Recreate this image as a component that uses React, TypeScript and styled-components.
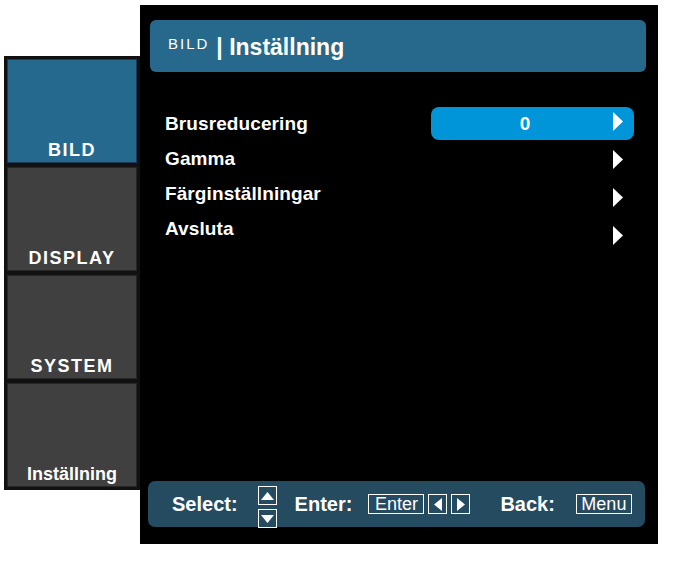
import React from 'react';
import styled, { createGlobalStyle } from 'styled-components';

const GlobalStyle = createGlobalStyle`
  html, body {
    margin: 0;
    background: #ffffff;
  }
  body {
    font-family: "Liberation Sans", Arial, sans-serif;
    color: #ffffff;
  }
`;

const Screen = styled.div`
  display: flex;
  align-items: flex-start;
  padding: 5px 0 0 4px;
`;

const Sidebar = styled.nav`
  margin-top: 51px;
  width: 136px;
  box-sizing: border-box;
  padding: 3px;
  background: #111111;
  display: flex;
  flex-direction: column;
  gap: 4px;
`;

const Tile = styled.div<{ $active?: boolean; $spaced?: boolean }>`
  height: 104px;
  box-sizing: border-box;
  border: 1px solid ${p => (p.$active ? '#1b3a57' : '#262626')};
  background: ${p => (p.$active ? '#26698f' : '#404040')};
  display: flex;
  align-items: flex-end;
  justify-content: center;
  padding-bottom: 1px;
  font-size: 18px;
  font-weight: bold;
  letter-spacing: ${p => (p.$spaced ? '1.5px' : '0')};
`;

const Panel = styled.main`
  width: 518px;
  height: 539px;
  box-sizing: border-box;
  background: #000000;
  padding: 15px 12px 17px 10px;
  display: flex;
  flex-direction: column;
`;

const Header = styled.header`
  height: 52px;
  border-radius: 6px;
  background: #27698c;
  display: flex;
  align-items: baseline;
  padding: 14px 0 0 18px;
  box-sizing: border-box;
`;

const Crumb = styled.span`
  font-size: 15px;
  letter-spacing: 2px;
  position: relative;
  top: -6px;
`;

const Title = styled.span`
  font-size: 23px;
  font-weight: bold;
  margin-left: 7px;
`;

const MenuList = styled.ul`
  list-style: none;
  margin: 35px 0 0 0;
  padding: 0 12px 0 15px;
  display: flex;
  flex-direction: column;
  gap: 2px;
`;

const Row = styled.li`
  height: 33px;
  display: flex;
  align-items: center;
  justify-content: space-between;
`;

const Label = styled.span`
  font-size: 19px;
  font-weight: bold;
  letter-spacing: 0.1px;
`;

const ValueArea = styled.div<{ $selected?: boolean }>`
  width: 203px;
  height: 33px;
  box-sizing: border-box;
  border-radius: 8px;
  background: ${p => (p.$selected ? '#0095d9' : 'transparent')};
  display: flex;
  align-items: center;
  padding-right: 11px;
`;

const Value = styled.span`
  flex: 1;
  text-align: center;
  font-size: 19px;
  font-weight: bold;
  padding-left: 6px;
`;

const ArrowSlot = styled.span<{ $drift: number }>`
  display: flex;
  transform: translateY(${p => p.$drift}px);
`;

const Footer = styled.footer`
  margin: auto 1px 0 -2px;
  height: 46px;
  border-radius: 7px;
  background: #254b61;
  display: flex;
  align-items: center;
  padding-left: 24px;
`;

const Hint = styled.span<{ $gap?: number }>`
  font-size: 20px;
  font-weight: bold;
  margin-left: ${p => p.$gap ?? 0}px;
`;

const UpDown = styled.div<{ $gap?: number }>`
  display: flex;
  flex-direction: column;
  gap: 4px;
  margin-left: ${p => p.$gap ?? 0}px;
  align-self: flex-end;
  margin-bottom: -1px;
`;

const KeyBox = styled.div<{ $w: number; $h?: number; $gap?: number }>`
  width: ${p => p.$w}px;
  height: ${p => p.$h ?? 20}px;
  box-sizing: border-box;
  border: 1px solid #ffffff;
  margin-left: ${p => p.$gap ?? 0}px;
  display: flex;
  align-items: center;
  justify-content: center;
  font-size: 18px;
`;

type Dir = 'up' | 'down' | 'left' | 'right';

const Tri = ({ dir, w, h }: { dir: Dir; w: number; h: number }) => {
  const pts = {
    up: `0,${h} ${w / 2},0 ${w},${h}`,
    down: `0,0 ${w},0 ${w / 2},${h}`,
    left: `${w},0 ${w},${h} 0,${h / 2}`,
    right: `0,0 ${w},${h / 2} 0,${h}`,
  }[dir];
  return (
    <svg width={w} height={h} viewBox={`0 0 ${w} ${h}`}>
      <polygon points={pts} fill="#ffffff" />
    </svg>
  );
};

const items = ['Brusreducering', 'Gamma', 'Färginställningar', 'Avsluta'];

export default function App() {
  return (
    <>
      <GlobalStyle />
      <Screen>
        <Sidebar>
          <Tile $active $spaced>BILD</Tile>
          <Tile $spaced>DISPLAY</Tile>
          <Tile $spaced>SYSTEM</Tile>
          <Tile>Inställning</Tile>
        </Sidebar>
        <Panel>
          <Header>
            <Crumb>BILD</Crumb>
            <Title>| Inställning</Title>
          </Header>
          <MenuList>
            {items.map((name, i) => (
              <Row key={name}>
                <Label>{name}</Label>
                <ValueArea $selected={i === 0}>
                  <Value>{i === 0 ? '0' : ''}</Value>
                  <ArrowSlot $drift={i * 3 - 2}>
                    <Tri dir="right" w={10} h={19} />
                  </ArrowSlot>
                </ValueArea>
              </Row>
            ))}
          </MenuList>
          <Footer>
            <Hint>Select:</Hint>
            <UpDown $gap={20}>
              <KeyBox $w={19} $h={19}>
                <Tri dir="up" w={13} h={8} />
              </KeyBox>
              <KeyBox $w={19} $h={19}>
                <Tri dir="down" w={13} h={8} />
              </KeyBox>
            </UpDown>
            <Hint $gap={18}>Enter:</Hint>
            <KeyBox $w={56} $gap={16}>Enter</KeyBox>
            <KeyBox $w={19} $gap={4}>
              <Tri dir="left" w={8} h={13} />
            </KeyBox>
            <KeyBox $w={19} $gap={4}>
              <Tri dir="right" w={8} h={13} />
            </KeyBox>
            <Hint $gap={30}>Back:</Hint>
            <KeyBox $w={56} $gap={21}>Menu</KeyBox>
          </Footer>
        </Panel>
      </Screen>
    </>
  );
}
